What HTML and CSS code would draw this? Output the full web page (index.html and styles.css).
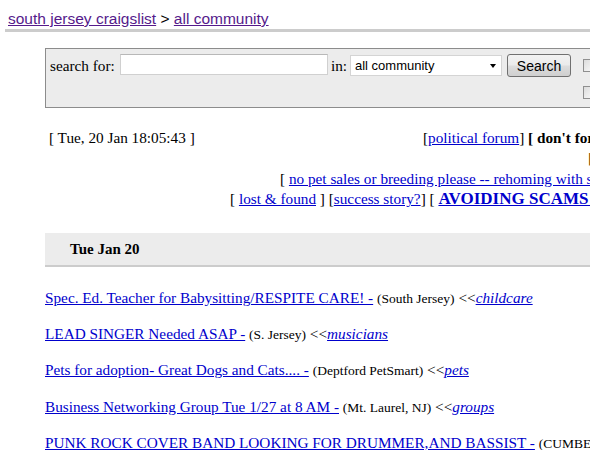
FILE: index.html
```html
<!DOCTYPE html>
<html lang="en">
<head>
<meta charset="utf-8">
<title>south jersey craigslist &gt; all community</title>
<link rel="stylesheet" href="styles.css">
</head>
<body>
<div class="page">
  <div class="bchead">
    <a class="visited" href="#">south jersey craigslist</a> &gt; <a class="visited" href="#">all community</a>
  </div>

  <form class="search">
    <div class="sgrid">
      <label class="lbl" for="q">search for:</label>
      <input id="q" class="q" type="text">
      <label class="lbl in" for="cat">in:</label>
      <div class="selwrap"><select id="cat" class="sel"><option>all community</option></select></div>
      <div class="btncell"><button type="button" class="btn">Search</button></div>
      <label class="chk"><input type="checkbox" class="cb"> title only</label>
      <label class="chk row2"><input type="checkbox" class="cb"> has image</label>
    </div>
  </form>

  <div class="toprow">
    <div class="date">[ Tue, 20 Jan 18:05:43 ]</div>
    <div class="notices">
      <div class="nl n1">[<a href="#">political forum</a>] <b>[ don't forget to read the notices ]</b></div>
      <div class="nl n2"><b class="brown">[</b> <b class="brown">personals are elsewhere ]</b></div>
      <div class="nl n3">[ <a href="#">no pet sales or breeding please -- rehoming with small adoption fee ok</a> ]</div>
      <div class="nl n4">[ <a href="#">lost &amp; found</a> ] [<a href="#">success story?</a>] [ <a href="#" class="big">AVOIDING SCAMS &amp; FRAUD</a> ]</div>
    </div>
  </div>

  <h4 class="dayhead">Tue Jan 20</h4>

  <div class="listings">
    <p class="row"><a href="#">Spec. Ed. Teacher for Babysitting/RESPITE CARE! -</a> <span class="loc">(South Jersey)</span> &lt;&lt;<a href="#" class="cat">childcare</a></p>
    <p class="row"><a href="#">LEAD SINGER Needed ASAP -</a> <span class="loc">(S. Jersey)</span> &lt;&lt;<a href="#" class="cat">musicians</a></p>
    <p class="row"><a href="#">Pets for adoption- Great Dogs and Cats.... -</a> <span class="loc">(Deptford PetSmart)</span> &lt;&lt;<a href="#" class="cat">pets</a></p>
    <p class="row"><a href="#">Business Networking Group Tue 1/27 at 8 AM -</a> <span class="loc">(Mt. Laurel, NJ)</span> &lt;&lt;<a href="#" class="cat">groups</a></p>
    <p class="row"><a href="#">PUNK ROCK COVER BAND LOOKING FOR DRUMMER,AND BASSIST -</a> <span class="loc">(CUMBERLAND CO)</span> &lt;&lt;<a href="#" class="cat">musicians</a></p>
  </div>
</div>
</body>
</html>
```

FILE: styles.css
```css
html {
  overflow: hidden;
  background: #fff;
}

body {
  margin: 0;
  font-family: "Liberation Serif", "Times New Roman", serif;
  font-size: 15.25px;
  color: #000;
}

.page {
  width: 1000px;
}

a {
  color: #0000cc;
  text-decoration: underline;
}

/* breadcrumb header */
.bchead {
  margin-left: 5px;
  padding: 10px 3px 1px;
  border-bottom: 3px solid #cccccc;
  font-family: "Liberation Sans", Arial, sans-serif;
  font-size: 15.5px;
  line-height: 18px;
}

.bchead a.visited {
  color: #551a8b;
}

/* search box */
.search {
  margin: 16px 0 0 45px;
  border: 1px solid #8c8c8c;
  background: #ececec;
  padding: 5px 0 3px 4px;
}

.sgrid {
  display: grid;
  grid-template-columns: 70px 208px 22px 152px 81px auto;
  grid-template-rows: 23px 23px;
  row-gap: 4px;
  align-items: center;
}

.lbl {
  line-height: 23px;
  white-space: nowrap;
}

.lbl.in {
  padding-left: 3px;
}

.q {
  align-self: start;
  box-sizing: border-box;
  width: 208px;
  height: 21px;
  margin: 0;
  border: 1px solid #d0d0d0;
  border-top-color: #b8b8b8;
  background: #fff;
  font: 13px "Liberation Sans", Arial, sans-serif;
  padding: 0 3px;
}

.selwrap {
  position: relative;
  width: 152px;
  height: 21px;
}

.sel {
  appearance: none;
  -webkit-appearance: none;
  box-sizing: border-box;
  width: 152px;
  height: 21px;
  margin: 0;
  border: 1px solid #d4d4d4;
  border-radius: 0;
  background: #fff;
  font: 13px "Liberation Sans", Arial, sans-serif;
  color: #000;
  padding: 0 0 0 4px;
}

.selwrap::after {
  content: "";
  position: absolute;
  right: 6px;
  top: 9px;
  border-top: 4px solid #000;
  border-left: 3.5px solid transparent;
  border-right: 3.5px solid transparent;
  pointer-events: none;
}

.btncell {
  display: flex;
  align-items: center;
}

.btn {
  margin: 0 0 0 5px;
  box-sizing: border-box;
  width: 64px;
  height: 23px;
  padding: 0;
  border: 1px solid #707070;
  border-radius: 3px;
  background: linear-gradient(#f2f2f2, #ebebeb 48%, #dddddd 52%, #cfcfcf);
  font: 14px "Liberation Sans", Arial, sans-serif;
  color: #000;
}

.chk {
  display: flex;
  align-items: center;
  gap: 4px;
  white-space: nowrap;
  font-size: 13px;
}

.chk.row2 {
  grid-column: 6;
  grid-row: 2;
}

.cb {
  appearance: none;
  -webkit-appearance: none;
  width: 13px;
  height: 13px;
  margin: 0;
  border: 1px solid #8f8f8f;
  background: linear-gradient(135deg, #dcdcdc, #fbfbfb);
  box-sizing: border-box;
}

/* date + notices */
.toprow {
  display: grid;
  grid-template-columns: 230px auto;
  margin-top: 20px;
  line-height: 20px;
}

.date {
  padding-left: 49px;
  white-space: nowrap;
}

.nl {
  white-space: nowrap;
}

.n1 { margin-left: 193px; }
.n2 { margin-left: 358px; }
.n3 { margin-left: 50px; padding-top: 1px; }
.n4 { margin-left: 0; }

.brown {
  color: #8b5a1a;
}

a.big {
  font-weight: bold;
  font-size: 17px;
  line-height: 1;
}

/* day header */
.dayhead {
  margin: 24px 0 22px 45px;
  padding: 7px 0 7px 25px;
  background: #ececec;
  border-bottom: 2px solid #cccccc;
  font-size: 15px;
  line-height: 18px;
  font-weight: bold;
}

/* listings */
.listings {
  padding-left: 45px;
}

.row {
  margin: 18px 0;
  line-height: 18.2px;
  white-space: nowrap;
}

.loc {
  font-size: 13.5px;
  line-height: 1;
}

a.cat {
  font-style: italic;
}
```
